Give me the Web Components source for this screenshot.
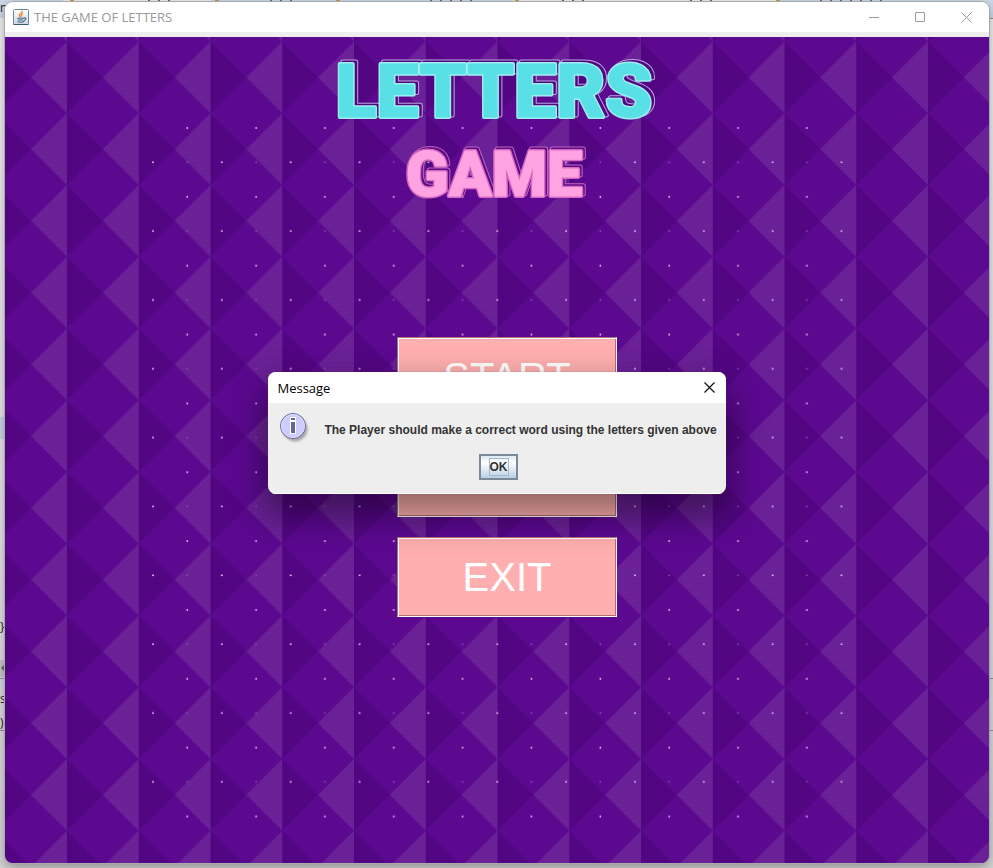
<!DOCTYPE html>
<html lang="en">
<head>
<meta charset="utf-8">
<title>The Game of Letters</title>
<style>
html, body { height: 100%; margin: 0; overflow: hidden; }
body { font-family: "Open Sans", "Noto Sans", sans-serif; }
</style>
</head>
<body>
<game-desktop></game-desktop>
<script>
const define = (name, html) => {
  const template = document.createElement("template");
  template.innerHTML = html;
  customElements.define(name, class extends HTMLElement {
    constructor() {
      super();
      this.attachShadow({ mode: "open" }).append(template.content.cloneNode(true));
    }
  });
};

define("java-icon", `
<style>:host { display: block; width: 16px; height: 16px; } svg { display: block; }</style>
<svg width="16" height="16" viewBox="0 0 16 16" aria-hidden="true">
  <defs><linearGradient id="g" x2="0" y2="1"><stop stop-color="#fff"/><stop offset="1" stop-color="#c9d6df"/></linearGradient></defs>
  <rect x=".5" y=".5" width="15" height="15" rx="1" fill="url(#g)" stroke="#66889c"/>
  <path d="M.5 15.5h15" stroke="#365b73"/>
  <g fill="none" stroke-linecap="round">
    <path d="M9.3 2.2C9.7 4 6.3 4.300 6.300 6c0 .9.9 1.400 1.200 2.200M9.900 4.800C8.300 5.400 8 6.200 8.500 7.100" stroke="#ee7d23" stroke-width="1.200"/>
    <path d="M4.500 9.200h6M5.300 11h4.500M4.800 12.800c2 .6 4.500.5 6.200-.2M11 8.900c2.500-.5 2.400 2 .2 2.400" stroke="#3f6884" stroke-width="1.100"/>
  </g>
</svg>`);

define("info-icon", `
<style>:host { display: block; width: 32px; height: 32px; } svg { display: block; }</style>
<svg width="32" height="32" viewBox="0 0 32 32" aria-hidden="true">
  <defs><filter id="b" x="-20%" y="-20%" width="150%" height="150%"><feGaussianBlur stdDeviation="1.300"/></filter></defs>
  <circle cx="15" cy="16" r="12.500" fill="#777" opacity=".6" filter="url(#b)"/>
  <circle cx="13" cy="13" r="12.500" fill="#ccf" stroke="#669"/>
  <circle cx="13" cy="13" r="11.500" fill="none" stroke="#dcdcff"/>
  <path d="M10 4h6v17h-6z" fill="#fff"/>
  <path d="M11 5h4v2h-4zM11 9h4v11h-4z" fill="#669"/>
</svg>`);

define("window-control", `
<style>
:host { display: block; width: 46px; height: 30px; color: #999; }
button { all: unset; display: grid; place-items: center; width: 100%; height: 100%; }
::slotted(svg) { display: block; }
</style>
<button type="button"><slot></slot></button>`);

define("diamond-backdrop", `
<style>:host { display: block; } svg { display: block; width: 100%; height: 100%; }</style>
<svg aria-hidden="true">
  <defs>
    <pattern id="tile" x="-9.750" y="4.500" width="71.750" height="71.750" patternUnits="userSpaceOnUse">
      <path d="M71.750 0L35.875 35.875L71.750 71.750z" fill="#6c2299"/>
      <path d="M0 0L35.875 35.875L0 71.750z" fill="#530684"/>
    </pattern>
    <pattern id="dots" x="147" y="90" width="68.850" height="68.850" patternUnits="userSpaceOnUse">
      <rect x="34.500" width="1.500" height="2" fill="#cfaee2"/>
      <rect y="34.500" width="2" height="1.500" fill="#cfaee2"/>
      <rect x="34.500" y="34.500" width="1.500" height="1.500" fill="#8a52b0"/>
    </pattern>
    <pattern id="grain" width="2" height="4" patternUnits="userSpaceOnUse">
      <path d="M0 0h1v1H0zM1 2h1v1H1z" fill="#40006c" opacity=".18"/>
    </pattern>
  </defs>
  <rect width="100%" height="100%" fill="#5d0992"/>
  <rect width="100%" height="100%" fill="url(#tile)"/>
  <rect width="100%" height="100%" fill="url(#grain)"/>
  <rect x="147" y="90" width="692" height="692" fill="url(#dots)"/>
</svg>`);

define("game-title", `
<style>
:host { display: block; }
h1 { margin: 0; }
svg { display: block; overflow: visible; margin: 0 auto; }
text { font-family: Roboto, sans-serif; font-weight: 900; text-anchor: middle; stroke-linejoin: round; paint-order: stroke; }
.one { font-size: 75px; }
.two { font-size: 63px; }
</style>
<h1><svg width="340" height="160" viewBox="0 0 340 160">
  <defs>
    <text id="one" class="one" x="167" y="68"><tspan>L</tspan><tspan>E</tspan><tspan>T</tspan><tspan>T</tspan><tspan>E</tspan><tspan>R</tspan><tspan>S</tspan></text>
    <text id="two" class="two" x="167" y="147"><tspan>G</tspan><tspan>A</tspan><tspan>M</tspan><tspan>E</tspan></text>
  </defs>
  <g stroke-width="5" stroke="#b9a3dc" fill="#50087f"><use href="#one" x="3" y="-2"/></g>
  <g stroke-width="3" stroke="#50087f" fill="#50087f"><use href="#one" x="3" y="-2"/></g>
  <g stroke-width="4" stroke="#a0eef2" fill="#59e0e6"><use href="#one"/></g>
  <g stroke-width="1" stroke="#59e0e6" fill="#59e0e6"><use href="#one"/></g>
  <g stroke-width="5" stroke="#c563bd" fill="#5b0b86"><use href="#two" x="2" y="-2"/></g>
  <g stroke-width="3" stroke="#5b0b86" fill="#5b0b86"><use href="#two" x="2" y="-2"/></g>
  <g stroke-width="4" stroke="#d868c2" fill="#ffa3e2"><use href="#two"/></g>
  <g stroke-width="1" stroke="#ffa3e2" fill="#ffa3e2"><use href="#two"/></g>
</svg></h1>`);

define("menu-button", `
<style>
:host { display: block; }
button {
  display: block; box-sizing: border-box; width: 100%; height: 80px; padding: 0;
  border: 1px solid; border-color: #b06f72 #fff #fff #b06f72; border-radius: 0;
  background: #ffafaf; color: #fff; box-shadow: inset 1px 1px #fff, inset -1px -1px #b06f72;
  font: 40px/76px "Liberation Sans", Arial, sans-serif;
}
</style>
<button type="button"><slot></slot></button>`);

define("message-dialog", `
<style>
:host {
  display: block; border-radius: 8px; overflow: hidden; background: #eee;
  box-shadow: 0 0 1px #555, 0 18px 36px 4px rgba(0,0,0,.42);
}
header { display: flex; height: 31px; align-items: center; justify-content: space-between; background: #fff; }
h2 { margin: 0; padding: 2px 0 0 9px; font: 13px/20px "Open Sans", "Noto Sans", sans-serif; color: #000; }
window-control { width: 32px; color: #111; }
.body { display: grid; grid-template-columns: 44px auto; padding: 10px 9px 13px 12px; border: solid #fff; border-width: 0 0 1px; }
p { margin: 0; padding-top: 9px; font: bold 12px/16px "Liberation Sans", Arial, sans-serif; color: #333; white-space: nowrap; }
info-icon { height: 41px; }
.ok {
  grid-column: 1 / -1; justify-self: center; box-sizing: border-box; width: 39px; height: 26px; padding: 0;
  display: grid; place-items: center; border: 2px solid #7a8a99; border-radius: 0;
  background: linear-gradient(#dde8f3, #fff 30%, #b8cfe5);
  font: bold 12px/16px "Liberation Sans", Arial, sans-serif; color: #333;
}
.ok span { border: 1px solid #a3b8cc; }
</style>
<header>
  <h2><slot name="title"></slot></h2>
  <window-control><svg width="11" height="11" role="img" aria-label="Close"><path d="M.5.5l10 10M10.500.5l-10 10" stroke="currentColor" stroke-width="1.200"/></svg></window-control>
</header>
<div class="body">
  <info-icon></info-icon>
  <p><slot></slot></p>
  <button class="ok" type="button"><span>OK</span></button>
</div>`);

define("app-window", `
<style>
:host {
  display: flex; flex-direction: column; box-sizing: border-box; overflow: hidden; position: relative;
  border-radius: 8px; background: #eee; box-shadow: 0 0 0 1px #a9a9ad, 0 4px 12px rgba(0,0,0,.35);
}
header { display: flex; align-items: center; height: 30px; padding-left: 8px; background: #fff; border-bottom: 5px solid #eee; }
h2 { flex: 1; margin: 0; padding: 0 0 0 5px; font: 13px/20px "Open Sans", "Noto Sans", sans-serif; color: #999; }
.stage { flex: 1; display: grid; min-height: 0; }
diamond-backdrop, main { grid-area: 1 / 1; min-height: 0; }
main { z-index: 1; }
.modal { position: absolute; inset: 0; z-index: 2; display: grid; place-content: center; }
</style>
<header>
  <java-icon></java-icon>
  <h2><slot name="title"></slot></h2>
  <window-control><svg width="11" height="11" role="img" aria-label="Minimize"><path d="M0 5.500h10" stroke="currentColor"/></svg></window-control>
  <window-control><svg width="11" height="11" role="img" aria-label="Maximize"><rect x=".5" y=".5" width="9" height="9" rx=".5" fill="none" stroke="currentColor"/></svg></window-control>
  <window-control><svg width="11" height="11" role="img" aria-label="Close"><path d="M.5.5l10 10M10.500.5l-10 10" stroke="currentColor"/></svg></window-control>
</header>
<div class="stage">
  <diamond-backdrop></diamond-backdrop>
  <main><slot></slot></main>
</div>
<div class="modal"><slot name="modal"></slot></div>`);

define("editor-behind", `
<style>
:host { display: block; background: linear-gradient(#f0f0f0, #e4e4e6 60%, #d4d4d4); font: 12px/16px "Open Sans", "Noto Sans", sans-serif; color: #333; }
svg { display: block; width: 100%; height: 100%; }
</style>
<svg aria-hidden="true">
  <rect width="100%" height="18" fill="#c9d8e8"/>
  <path d="M63 0h148v3H63zM513 0h265v3H513z" fill="#ececec"/>
  <path d="M70 0h4v2h-4zM215 0h4v2h-4zM336 0h4v2h-4zM515 0h4v2h-4zM776 0h4v2h-4z" fill="#c29a45"/>
  <path d="M148 .5h30M270 .5h22M430 .5h50M562 .5h24M690 .5h30M820 .5h64" stroke="#667" stroke-dasharray="2 8"/>
  <path d="M0 417h5v22H0z" fill="#c8d6e4"/>
  <path d="M0 660h5v17H0z" fill="#c6c6c6"/>
  <path d="M5 664l-4 4 4 4z" fill="#666"/>
  <path d="M0 678.500h5M0 730.500h5M989 18.500h5M989 730.500h5M989 678.500h5" stroke="#8d929a"/>
  <path d="M0 679h5v11H0z" fill="#cfdbe8"/>
  <g font-size="12" fill="#222"><text x="0" y="12">n</text><text x="0" y="631">}</text><text x="0" y="703">s</text><text x="0" y="727">)</text></g>
</svg>`);

define("game-desktop", `
<style>
:host { display: grid; height: 100%; }
editor-behind, app-window { grid-area: 1 / 1; min-width: 0; min-height: 0; }
app-window { margin: 2px 4px 5px 5px; }
.screen { display: grid; justify-content: center; padding-top: 12px; }
nav { display: grid; grid-template-columns: 220px; gap: 20px; justify-content: center; padding: 128px 0 0 20px; }
</style>
<editor-behind></editor-behind>
<app-window>
  <span slot="title">THE GAME OF LETTERS</span>
  <div class="screen">
    <game-title></game-title>
    <nav>
      <menu-button>START</menu-button>
      <menu-button aria-label="Help"></menu-button>
      <menu-button>EXIT</menu-button>
    </nav>
  </div>
  <message-dialog slot="modal" role="dialog">
    <span slot="title">Message</span>
    The Player should make a correct word using the letters given above
  </message-dialog>
</app-window>`);
</script>
</body>
</html>
